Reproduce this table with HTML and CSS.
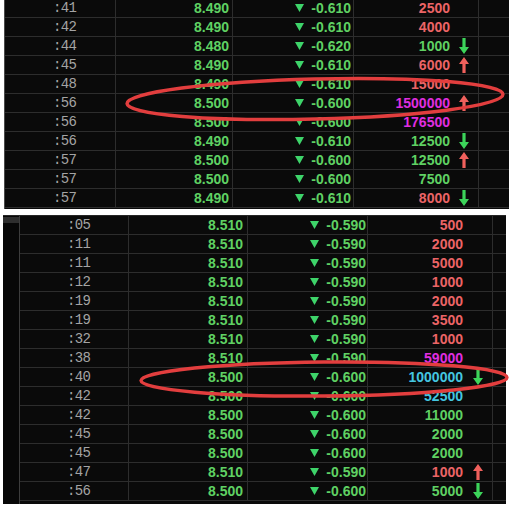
FILE: index.html
```html
<!DOCTYPE html>
<html>
<head>
<meta charset="utf-8">
<link rel="stylesheet" href="styles.css">
</head>
<body>
<svg class="defs" width="0" height="0">
  <defs>
    <path id="tri" d="M0 0 L9 0 L4.5 8 Z"/>
    <path id="up" d="M5 0 L10 7 L6.6 7 L6.6 16 L3.4 16 L3.4 7 L0 7 Z"/>
    <path id="down" d="M5 16 L10 9 L6.6 9 L6.6 0 L3.4 0 L3.4 9 L0 9 Z"/>
  </defs>
</svg>
<div class="page">
  <div class="panel top">
    <div class="rows">
      <div class="row"><div class="c t">:41</div><div class="c p">8.490</div><div class="c d"><svg class="tri"><use href="#tri"/></svg>-0.610</div><div class="c v"><span class="red">2500</span><span class="slot"></span></div><div class="c x"></div></div>
      <div class="row"><div class="c t">:42</div><div class="c p">8.490</div><div class="c d"><svg class="tri"><use href="#tri"/></svg>-0.610</div><div class="c v"><span class="red">4000</span><span class="slot"></span></div><div class="c x"></div></div>
      <div class="row"><div class="c t">:44</div><div class="c p">8.480</div><div class="c d"><svg class="tri"><use href="#tri"/></svg>-0.620</div><div class="c v"><span class="grn">1000</span><span class="slot"><svg class="ar dn"><use href="#down"/></svg></span></div><div class="c x"></div></div>
      <div class="row"><div class="c t">:45</div><div class="c p">8.490</div><div class="c d"><svg class="tri"><use href="#tri"/></svg>-0.610</div><div class="c v"><span class="red">6000</span><span class="slot"><svg class="ar upc"><use href="#up"/></svg></span></div><div class="c x"></div></div>
      <div class="row"><div class="c t">:48</div><div class="c p">8.490</div><div class="c d"><svg class="tri"><use href="#tri"/></svg>-0.610</div><div class="c v"><span class="red">15000</span><span class="slot"></span></div><div class="c x"></div></div>
      <div class="row"><div class="c t">:56</div><div class="c p">8.500</div><div class="c d"><svg class="tri"><use href="#tri"/></svg>-0.600</div><div class="c v"><span class="mag">1500000</span><span class="slot"><svg class="ar upc"><use href="#up"/></svg></span></div><div class="c x"></div></div>
      <div class="row"><div class="c t">:56</div><div class="c p">8.500</div><div class="c d"><svg class="tri"><use href="#tri"/></svg>-0.600</div><div class="c v"><span class="mag">176500</span><span class="slot"></span></div><div class="c x"></div></div>
      <div class="row"><div class="c t">:56</div><div class="c p">8.490</div><div class="c d"><svg class="tri"><use href="#tri"/></svg>-0.610</div><div class="c v"><span class="grn">12500</span><span class="slot"><svg class="ar dn"><use href="#down"/></svg></span></div><div class="c x"></div></div>
      <div class="row"><div class="c t">:57</div><div class="c p">8.500</div><div class="c d"><svg class="tri"><use href="#tri"/></svg>-0.600</div><div class="c v"><span class="grn">12500</span><span class="slot"><svg class="ar upc"><use href="#up"/></svg></span></div><div class="c x"></div></div>
      <div class="row"><div class="c t">:57</div><div class="c p">8.500</div><div class="c d"><svg class="tri"><use href="#tri"/></svg>-0.600</div><div class="c v"><span class="grn">7500</span><span class="slot"></span></div><div class="c x"></div></div>
      <div class="row"><div class="c t">:57</div><div class="c p">8.490</div><div class="c d"><svg class="tri"><use href="#tri"/></svg>-0.610</div><div class="c v"><span class="red">8000</span><span class="slot"><svg class="ar dn"><use href="#down"/></svg></span></div><div class="c x"></div></div>
    </div>
  </div>

  <div class="panel bot">
    <div class="side"><div class="side-head"></div></div>
    <div class="rows">
      <div class="row"><div class="c t">:05</div><div class="c p">8.510</div><div class="c d"><svg class="tri"><use href="#tri"/></svg>-0.590</div><div class="c v"><span class="red">500</span><span class="slot"></span></div><div class="c x"></div></div>
      <div class="row"><div class="c t">:11</div><div class="c p">8.510</div><div class="c d"><svg class="tri"><use href="#tri"/></svg>-0.590</div><div class="c v"><span class="red">2000</span><span class="slot"></span></div><div class="c x"></div></div>
      <div class="row"><div class="c t">:11</div><div class="c p">8.510</div><div class="c d"><svg class="tri"><use href="#tri"/></svg>-0.590</div><div class="c v"><span class="red">5000</span><span class="slot"></span></div><div class="c x"></div></div>
      <div class="row"><div class="c t">:12</div><div class="c p">8.510</div><div class="c d"><svg class="tri"><use href="#tri"/></svg>-0.590</div><div class="c v"><span class="red">1000</span><span class="slot"></span></div><div class="c x"></div></div>
      <div class="row"><div class="c t">:19</div><div class="c p">8.510</div><div class="c d"><svg class="tri"><use href="#tri"/></svg>-0.590</div><div class="c v"><span class="red">2000</span><span class="slot"></span></div><div class="c x"></div></div>
      <div class="row"><div class="c t">:19</div><div class="c p">8.510</div><div class="c d"><svg class="tri"><use href="#tri"/></svg>-0.590</div><div class="c v"><span class="red">3500</span><span class="slot"></span></div><div class="c x"></div></div>
      <div class="row"><div class="c t">:32</div><div class="c p">8.510</div><div class="c d"><svg class="tri"><use href="#tri"/></svg>-0.590</div><div class="c v"><span class="red">1000</span><span class="slot"></span></div><div class="c x"></div></div>
      <div class="row"><div class="c t">:38</div><div class="c p">8.510</div><div class="c d"><svg class="tri"><use href="#tri"/></svg>-0.590</div><div class="c v"><span class="mag">59000</span><span class="slot"></span></div><div class="c x"></div></div>
      <div class="row"><div class="c t">:40</div><div class="c p">8.500</div><div class="c d"><svg class="tri"><use href="#tri"/></svg>-0.600</div><div class="c v"><span class="cyn">1000000</span><span class="slot"><svg class="ar dn"><use href="#down"/></svg></span></div><div class="c x"></div></div>
      <div class="row"><div class="c t">:42</div><div class="c p">8.500</div><div class="c d"><svg class="tri"><use href="#tri"/></svg>-0.600</div><div class="c v"><span class="cyn">52500</span><span class="slot"></span></div><div class="c x"></div></div>
      <div class="row"><div class="c t">:42</div><div class="c p">8.500</div><div class="c d"><svg class="tri"><use href="#tri"/></svg>-0.600</div><div class="c v"><span class="grn">11000</span><span class="slot"></span></div><div class="c x"></div></div>
      <div class="row"><div class="c t">:45</div><div class="c p">8.500</div><div class="c d"><svg class="tri"><use href="#tri"/></svg>-0.600</div><div class="c v"><span class="grn">2000</span><span class="slot"></span></div><div class="c x"></div></div>
      <div class="row"><div class="c t">:45</div><div class="c p">8.500</div><div class="c d"><svg class="tri"><use href="#tri"/></svg>-0.600</div><div class="c v"><span class="grn">2000</span><span class="slot"></span></div><div class="c x"></div></div>
      <div class="row"><div class="c t">:47</div><div class="c p">8.510</div><div class="c d"><svg class="tri"><use href="#tri"/></svg>-0.590</div><div class="c v"><span class="red">1000</span><span class="slot"><svg class="ar upc"><use href="#up"/></svg></span></div><div class="c x"></div></div>
      <div class="row"><div class="c t">:56</div><div class="c p">8.500</div><div class="c d"><svg class="tri"><use href="#tri"/></svg>-0.600</div><div class="c v"><span class="grn">5000</span><span class="slot"><svg class="ar dn"><use href="#down"/></svg></span></div><div class="c x"></div></div>
    </div>
  </div>

  <svg class="marks" width="509" height="510" viewBox="0 0 509 510">
    <ellipse cx="315" cy="99" rx="188" ry="20" transform="rotate(-1.4 315 99)"/>
    <ellipse cx="324" cy="379" rx="183" ry="17" transform="rotate(-0.5 324 379)"/>
  </svg>
</div>
</body>
</html>
```

FILE: styles.css
```css
* { box-sizing: border-box; }
html, body { margin: 0; padding: 0; background: #ffffff; }
body { width: 509px; height: 510px; overflow: hidden; }

.defs { position: absolute; width: 0; height: 0; }

.page { position: relative; width: 509px; height: 510px; }

.panel {
  background: #0a0a0a;
  overflow: hidden;
}

.panel.top {
  margin-left: 4px;
  width: 505px;
  height: 209px;
  border-left: 1px solid #4a4a4a;
}
.panel.top .rows { margin-top: -1px; }

.panel.bot {
  margin-top: 6px;
  margin-left: 3px;
  width: 503px;
  height: 289px;
  display: flex;
  border-top: 1px solid #262626;
}

.side {
  width: 17px;
  flex: none;
  border-right: 1px solid #3c3c3c;
  background: #070707;
}
.side-head {
  height: 6px;
  margin-top: 1px;
  background: #2e2e2e;
}

.rows { flex: 1; }

.row {
  display: grid;
  height: 19px;
  border-bottom: 1px solid #2d2d2d;
}
.top .row { grid-template-columns: 111px 117px 121px 125px 1fr; }
.bot .row { grid-template-columns: 109px 119px 120px 125px 1fr; }

.c {
  border-right: 1px solid #2d2d2d;
  height: 18px;
  line-height: 18px;
  white-space: nowrap;
  display: flex;
  align-items: center;
}
.c.x { border-right: none; }

.c.t {
  font-family: "Liberation Mono", "DejaVu Sans Mono", monospace;
  font-size: 14px;
  letter-spacing: -0.6px;
  color: #a4a4a4;
}
.top .c.t { padding-left: 48px; }
.bot .c.t { padding-left: 47px; }

.c.p, .c.d, .c.v {
  font-family: "Liberation Sans", Arial, sans-serif;
  font-weight: bold;
  font-size: 14px;
  justify-content: flex-end;
}
.c.p, .c.d { color: #5fd163; }
.top .c.p { padding-right: 3px; }
.bot .c.p { padding-right: 4px; }
.top .c.d { padding-right: 2px; }
.bot .c.d { padding-right: 1px; }

.tri {
  width: 9px;
  height: 8px;
  fill: #3ed46a;
  margin-right: 7px;
  flex: none;
}

.slot {
  width: 28px;
  height: 18px;
  display: flex;
  align-items: center;
  justify-content: center;
  flex: none;
}
.bot .slot { width: 29px; }

.ar { width: 10px; height: 16px; }
.ar.upc { fill: #f0605c; }
.ar.dn { fill: #3cd45a; }

.red { color: #ec6466; }
.grn { color: #5fd163; }
.mag { color: #e02ee0; }
.cyn { color: #44c6e0; }

.marks {
  position: absolute;
  left: 0;
  top: 0;
  pointer-events: none;
}
.marks ellipse {
  fill: none;
  stroke: #e23e3e;
  stroke-width: 3.5;
}
```
